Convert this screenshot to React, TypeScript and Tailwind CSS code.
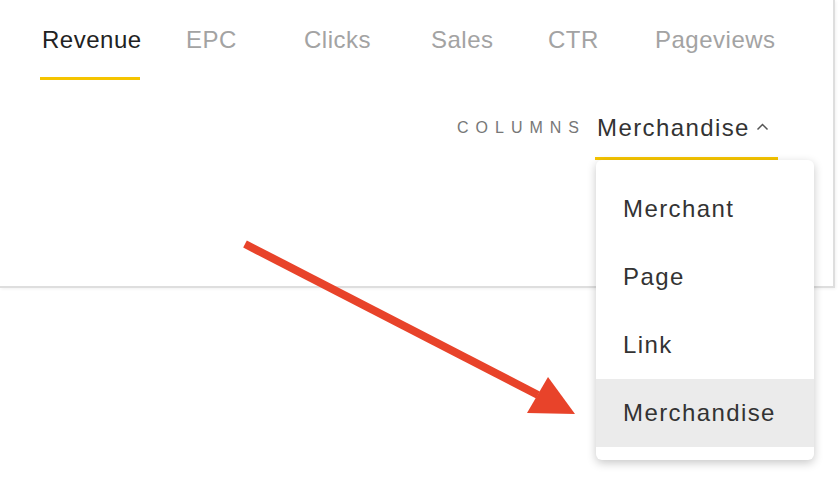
import React from 'react';

const tabs = [
  { label: 'Revenue', width: 'w-[144px]', active: true },
  { label: 'EPC', width: 'w-[118px]', active: false },
  { label: 'Clicks', width: 'w-[127px]', active: false },
  { label: 'Sales', width: 'w-[117px]', active: false },
  { label: 'CTR', width: 'w-[107px]', active: false },
  { label: 'Pageviews', width: 'w-[130px]', active: false },
];

const options = ['Merchant', 'Page', 'Link', 'Merchandise'];

export default function App() {
  const selected = 'Merchandise';

  return (
    <div className="relative w-[840px] h-[490px] overflow-hidden bg-white font-['Liberation_Sans',Arial,sans-serif]">
      <div className="w-[835px] h-[288px] border-r-2 border-b-2 border-[#dedede] shadow-[1px_1px_3px_rgba(0,0,0,0.06)]">
        <div className="flex pl-[40px] pt-[24px]">
          {tabs.map((tab) => (
            <div key={tab.label} className={`${tab.width} flex flex-col items-start`}>
              <div
                className={`px-[2px] text-[24px] leading-[32px] tracking-[0.5px] ${
                  tab.active ? 'text-[#222]' : 'text-[#a3a3a3]'
                }`}
              >
                {tab.label}
              </div>
              <div className={`mt-[21px] h-[3px] w-[100px] ${tab.active ? 'bg-[#f5c400]' : 'bg-transparent'}`} />
            </div>
          ))}
        </div>

        <div className="flex justify-end items-start pr-[55px] mt-[32px]">
          <div className="text-[16px] leading-[32px] tracking-[7px] text-[#777] mr-[9px]">COLUMNS</div>
          <div className="flex flex-col">
            <div className="flex items-center px-[2px]">
              <span className="text-[24px] leading-[32px] tracking-[1.4px] text-[#333]">{selected}</span>
              <svg className="ml-[6px] mt-[-2px]" width="13" height="8" viewBox="0 0 13 8" fill="none">
                <path d="M1.5 6.5 L6.5 1.5 L11.5 6.5" stroke="#555" strokeWidth="1.5" />
              </svg>
            </div>
            <div className="mt-[13px] h-[3px] w-[183px] bg-[#f5c400]" />
          </div>
        </div>
      </div>

      <div className="absolute left-[596px] top-[160px] w-[218px] h-[300px] py-[15px] rounded-[6px] bg-white shadow-[0_3px_10px_rgba(0,0,0,0.22)]">
        {options.map((opt) => (
          <div
            key={opt}
            className={`h-[68px] flex items-center pl-[27px] text-[24px] tracking-[1.4px] text-[#333] ${
              opt === selected ? 'bg-[#ebebeb]' : ''
            }`}
          >
            {opt}
          </div>
        ))}
      </div>

      <svg className="absolute left-0 top-0 pointer-events-none" width="840" height="490" viewBox="0 0 840 490">
        <line x1="245" y1="244" x2="538" y2="395" stroke="#e8432a" strokeWidth="8" />
        <polygon points="548,377 527,413 575,414" fill="#e8432a" />
      </svg>
    </div>
  );
}
